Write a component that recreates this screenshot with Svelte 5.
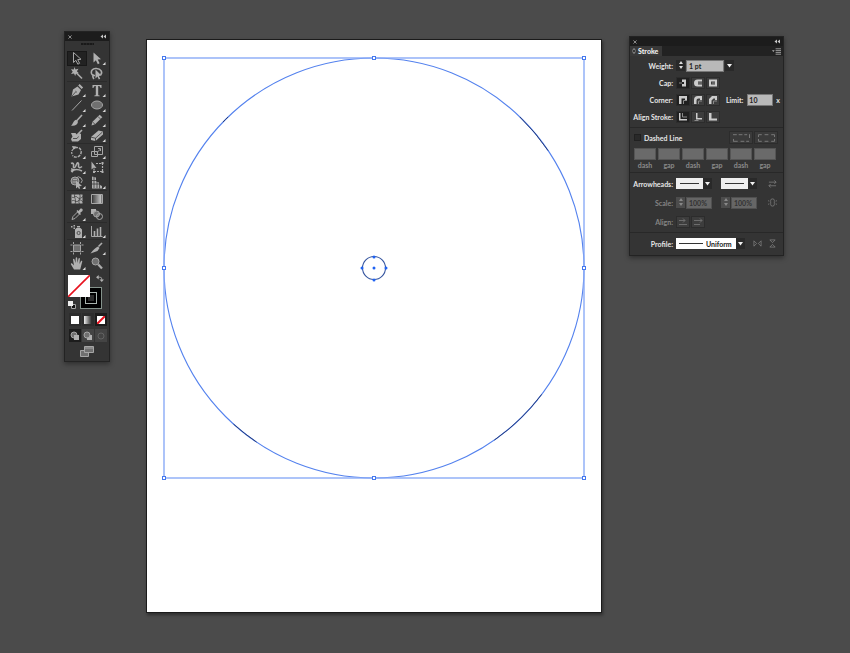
<script>
  const arrow = 'M5.5 1.5v10l2.4-2.2 1.9 3.9 1.8-.9-1.9-3.7 3.3-.3z';
  // Each shape: [kind, path]; f = filled, s = stroked, d = dark detail, t = thick stroke
  const groups = [
    [
      { name: 'Selection', on: true, p: [['d', arrow], ['s', arrow]] },
      { name: 'Direct Selection', more: true, p: [['f', arrow]] },
      { name: 'Magic Wand', p: [['t', 'M8.5 7l5.500 5.500'], ['f', 'M6.5 1l1 2.600 3-.8-1.600 2.500 2 2-2.800.1L7.200 10 6 7.400 3 8l1.700-2.300L3 3.200l2.800.4z']] },
      { name: 'Lasso', p: [['t', 'M7 9.500C2 10 2 3 7.500 2.500s7.500 4 5 6.500M6 9c-2 0-1 3 0 4'], ['f', 'M7.500 3.500v9l2-2 1.300 3 1.400-.7-1.300-2.800 2.600-.4z']] }
    ],
    [
      { name: 'Pen', more: true, p: [['f', 'M3.500 13.500L5 6.500l4.500-3 3.500 3.500-2.500 4.500z'], ['f', 'M10.200 2.600L11.600 1l3.500 3.500-1.500 1.500z'], ['k', 'M4 13l4-4.500M7.500 8.200l1.200 1.100']] },
      { name: 'Type', more: true, p: [['f', 'M4.500 2h9v3h-1c-.3-1.500-.8-2-2.300-2v8.500c0 .8.300 1 1.500 1v.8H6.300v-.8c1.200 0 1.500-.2 1.500-1V3c-1.500 0-2 .5-2.300 2h-1z']] },
      { name: 'Line Segment', more: true, p: [['s', 'M4 12.500L13.500 2.500']] },
      { name: 'Ellipse', more: true, p: [['g', 'M3.500 7a5.500 4 0 1 0 11 0a5.500 4 0 1 0-11 0z'], ['s', 'M3.500 7a5.500 4 0 1 0 11 0a5.500 4 0 1 0-11 0z']] },
      { name: 'Paintbrush', more: true, p: [['t', 'M14 2L8.500 8'], ['f', 'M8 6.800l2 2c-.4 3-3.500 4.500-7 3.700 2-.8 2-4.500 5-5.700z']] },
      { name: 'Pencil', more: true, p: [['f', 'M3.500 12.500l1-3.700 7.200-7 2.600 2.500-7.200 7z'], ['k', 'M4.600 9l2.500 2.400M10 3.500l2.500 2.500']] },
      { name: 'Blob Brush', p: [['f', 'M3 5h4.500L9 7l2-2 2 1v5l-3 2.500H4L3 11l1.500-2.500z'], ['t', 'M8.500 7.500L14 2'], ['k', 'M5 10.500h4l1.500-2']] },
      { name: 'Eraser', more: true, p: [['f', 'M3 9l7.500-6.500 4.500 1v3L7.500 13 3 12z'], ['k', 'M3 9.200l4.500 1 7-6.200M7.500 10v3']] }
    ],
    [
      { name: 'Rotate', more: true, p: [['c', 'M7 2.800c4-1.500 7 2 6 5.500s-6 5.500-8.500 2'], ['r', 'M4 9c-1-3 .5-5 3-6'], ['f', 'M4 1l4.500.4L5.500 5z']] },
      { name: 'Scale', more: true, p: [['s', 'M6.500 1.500h8v8h-8zM3.500 6.500h6v5h-6z'], ['s', 'M9 7.500l3.500-3.500M10 3.500h2.500v2.500']] },
      { name: 'Width', more: true, p: [['t', 'M3 3.500c2-1 3 .5 2.500 2.500s1 2.500 2 .5l1.500-3c1-1.500 2 0 1.500 2s1 3 3.500 1M3 11.500c4-3 7-2.500 11-.5'], ['f', 'M3 8l4 1.500L4 13z']] },
      { name: 'Free Transform', p: [['r', 'M8 3.500h6.500v8H6v-3'], ['f', 'M3.500 1.500v8l2-1.800 3 .2zM13.500 2h2v2h-2zM13.500 11h2v2h-2zM5 11h2v2H5z']] },
      { name: 'Shape Builder', more: true, p: [['g', 'M3 6a4 4 0 1 0 8 0a4 4 0 1 0-8 0z'], ['s', 'M3 6a4 4 0 1 0 8 0a4 4 0 1 0-8 0M8 3a3.500 3.500 0 1 1 5 5M5 4.500h4M4.500 7h4'], ['f', 'M8 5.500v8l1.800-1.600 1.200 2 1.200-.7-1-2 2.800-.3z']] },
      { name: 'Perspective Grid', more: true, p: [['f', 'M4 1.500l4 1v4l3 1v2l3 1.500v2.500H4z'], ['k', 'M6 2v11M9 7v6M4 5.500h4M4 9h9M11.500 9.500v4']] }
    ],
    [
      { name: 'Mesh', p: [['f', 'M3.500 2.500h11v9h-11z'], ['k', 'M4 5c2 2 3-2 5 0s3 2 6-.5M4 9c2-2 4 2 6 0s3-1 5 1M7 2c-2 3 2 5 0 10M11.500 2c2 4-2 6 0 10']] },
      { name: 'Gradient', p: [['bar', 'M4.500 2.500h9v9h-9z'], ['s', 'M3.500 2.500h11v9h-11z']] },
      { name: 'Eyedropper', more: true, p: [['s', 'M4 12.500l1-3 4.500-4.500 2 2L7 11.500z'], ['f', 'M8.500 4l1-1 1 1 2-2.500c2-.5 2.500.8 2 2.500L12 6l1 1-1 1z']] },
      { name: 'Blend', p: [['f', 'M3 2h5v5H3z'], ['g', 'M5.500 7a3 3 0 1 0 6 0a3 3 0 1 0-6 0z'], ['s', 'M5.500 7a3 3 0 1 0 6 0a3 3 0 1 0-6 0zM8.500 9.500a3 3 0 1 0 6 0a3 3 0 1 0-6 0z']] }
    ],
    [
      { name: 'Symbol Sprayer', more: true, p: [['f', 'M7 5.500l1.500-1.500h4L14 5.500V14H7zM9 2h3v1.500H9zM3 2h1.500v1.500H3zM5.500 1h1.500v1.500H5.500zM5.500 3.500h1.500V5H5.500z'], ['k', 'M9 9a1.600 1.600 0 1 0 3.200 0a1.600 1.600 0 1 0-3.200 0']] },
      { name: 'Column Graph', more: true, p: [['s', 'M3.500 2v10.500h11'], ['t', 'M6.500 7v5M9.500 4.500V12M12.500 3v9']] }
    ],
    [
      { name: 'Artboard', p: [['g', 'M5.500 4h7v6.500h-7z'], ['s', 'M5.500 4h7v6.500h-7zM5.500 1v2M12.500 1v2M5.500 11.500v2M12.500 11.500v2M2.500 4h2M13.500 4h2M2.500 10.500h2M13.500 10.500h2']] },
      { name: 'Slice', more: true, p: [['f', 'M2.500 12.500C5 9 8 6.500 10 5.500l1.500 1.500-2 3z'], ['t', 'M10.500 5.500L14 2']] },
      { name: 'Hand', more: true, p: [['f', 'M6 13.500L3 8.500c-.5-1.300.8-1.600 1.500-.7L6 9.500 5 3.500c0-1 1.200-1 1.500 0L7.500 7l.2-5c.2-1 1.400-1 1.500 0l.3 5 1-4.500c.4-1 1.500-.7 1.400.3L11.500 8l1.500-3c.6-.8 1.500-.2 1.200.7l-2 7.800z']] },
      { name: 'Zoom', p: [['g', 'M4 5.500a3.500 3.500 0 1 0 7 0a3.500 3.500 0 1 0-7 0z'], ['s', 'M4 5.500a3.500 3.500 0 1 0 7 0a3.500 3.500 0 1 0-7 0z'], ['w', 'M10.300 8.500l3.700 4']] }
    ]
  ];

  const caps = [
    { name: 'Butt cap', on: true, d: 'M5 1.500h4v7H5V6h2V4H5z', e: 'M2 5h3' },
    { name: 'Round cap', d: 'M10 1.500H5.500a3.500 3.500 0 0 0 0 7H10V6.500H6v-3h4z', e: 'M6 5h4' },
    { name: 'Projecting cap', d: 'M2 1.500h8v7H2zM4 3.500v3h4v-3z', e: 'M5 5h3' }
  ];
  const corners = [
    { name: 'Miter join', on: true, d: 'M2 1h8v4H8V3.500H4.500V9H2z', e: 'M6.500 9V5.500H10' },
    { name: 'Round join', d: 'M10 1H6Q2 1 2 5v4h2.500V5.500q0-2 2-2H8V5h2z', e: 'M6.500 9V6H10' },
    { name: 'Bevel join', d: 'M10 1H5L2 4v5h2.500V5.500l2-2H8V5h2z', e: 'M6.500 9V6H10' }
  ];
  const aligns = [
    { name: 'Center', on: true, d: 'M2 1h1.500v6H10v1.500H2z', e: 'M5.500 1v4H10' },
    { name: 'Inside', d: 'M4 1h1.500v5H10v1.500H4z', e: 'M2.500 8.500h4' },
    { name: 'Outside', d: 'M2 1h2.500v5.500H10V9H2z', e: 'M2 8.500h8' }
  ];
  const rows = [
    { label: 'Cap:', items: caps },
    { label: 'Corner:', items: corners, limit: true },
    { label: 'Align Stroke:', items: aligns }
  ];
  const dashes = ['dash', 'gap', 'dash', 'gap', 'dash', 'gap'];
  const nodes = [[164, 58], [374, 58], [584, 58], [164, 268], [584, 268], [164, 478], [374, 478], [584, 478]];
  const anchors = [[374, 257], [362, 268], [374, 268], [386, 268], [374, 280]];

  let weight = $state('1 pt');
  let limit = $state('10');
  let dashed = $state(false);
</script>

{#snippet spinner(name, off)}
  <span class="spinner" class:off>
    <button aria-label="Increase {name}" disabled={off}><svg viewBox="0 0 8 5"><path d="M4 1l2 3H2z" /></svg></button>
    <button aria-label="Decrease {name}" disabled={off}><svg viewBox="0 0 8 5"><path d="M4 4l2-3H2z" /></svg></button>
  </span>
{/snippet}

{#snippet titlebar()}
  <header class="titlebar">
    <button aria-label="Close"><svg viewBox="0 0 5 5"><path d="M.5 .5l4 4M4.500 .5l-4 4" /></svg></button>
    <button aria-label="Collapse"><svg class="wide" viewBox="0 0 6 5"><path class="solid" d="M3 .5v4l-2.500-2zM6 .5v4l-2.500-2z" /></svg></button>
  </header>
{/snippet}

{#snippet chooser(name, cls, text)}
  <span class="chooser {cls}">
    <select aria-label={name}><option>{text}</option></select>
    <svg viewBox="0 0 9 11"><path d="M2 4h5L4.500 7.500z" /></svg>
  </span>
{/snippet}

<main>
  <aside class="window tools" aria-label="Tools">
    {@render titlebar()}
    <div class="grip"></div>
    {#each groups as group}
      <div class="group">
        {#each group as tool}
          <button class="tool" class:on={tool.on} aria-label={tool.name}>
            <svg viewBox="0 0 18 15">
              {#if tool.name === 'Gradient'}
                <linearGradient id="ramp"><stop stop-color="#444" /><stop offset="1" stop-color="#ccc" /></linearGradient>
              {/if}
              {#each tool.p as [kind, d]}<path class={kind} {d} />{/each}
              {#if tool.more}<path class="more" d="M17.500 11v3h-3z" />{/if}
            </svg>
          </button>
        {/each}
      </div>
    {/each}
    <div class="colors">
      <button class="stroke-box" aria-label="Stroke"><i></i></button>
      <button class="fill-box" aria-label="Fill"><svg viewBox="0 0 22 22"><path d="M0 22L22 0" /></svg></button>
      <button class="swap" aria-label="Swap fill and stroke"><svg viewBox="0 0 9 8"><path class="s" d="M2 2.500h2.500q2 0 2 2V6" /><path class="f" d="M3 0v5L0 2.500zM4 5h5L6.500 8z" /></svg></button>
      <button class="default" aria-label="Default fill and stroke"><svg viewBox="0 0 8 8"><path class="ring" d="M3 3h5v5H3z" /><path class="s" d="M3.500 3.500h4v4h-4z" /><path class="white-fill" d="M0 0h5v5H0z" /></svg></button>
    </div>
    <div class="trio paint">
      <button aria-label="Color"><i class="white"></i></button>
      <button aria-label="Gradient"><i class="fade"></i></button>
      <button aria-label="None" class="on"><i class="white"><svg viewBox="0 0 8 8"><path d="M0 8L8 0" /></svg></i></button>
    </div>
    <div class="trio modes">
      <button aria-label="Draw normal" class="on"><svg viewBox="0 0 12 12"><path class="g" d="M2 5a3 3 0 1 0 6 0a3 3 0 1 0-6 0" /><path class="s" d="M2 5a3 3 0 1 0 6 0a3 3 0 1 0-6 0" /><path class="f" d="M5 5h5v5H5z" /></svg></button>
      <button aria-label="Draw behind"><svg viewBox="0 0 12 12"><path class="f" d="M5 5h5v5H5z" /><path class="g" d="M2 5a3 3 0 1 0 6 0a3 3 0 1 0-6 0" /><path class="s" d="M2 5a3 3 0 1 0 6 0a3 3 0 1 0-6 0" /></svg></button>
      <button aria-label="Draw inside" disabled><svg viewBox="0 0 12 12"><path class="s" d="M3 6a3 3 0 1 0 6 0a3 3 0 1 0-6 0" /></svg></button>
    </div>
    <button class="screen" aria-label="Change screen mode">
      <svg viewBox="0 0 14 11"><path class="g" d="M.5 4.500h8v6h-8z" /><path class="s" d="M.5 4.500h8v6h-8z" /><path class="g" d="M4.500 .5h9v6h-9z" /><path class="s" d="M4.500 .5h9v6h-9zM4.500 2h9" /></svg>
    </button>
  </aside>

  <section class="artboard" aria-label="Artboard">
    <svg viewBox="147 40 454 572">
      <circle class="path" cx="374" cy="268" r="210" />
      <circle class="ink" cx="374" cy="268" r="210" pathLength="360" stroke-dasharray="0 37 18 69 8 92 2 88 12 34" />
      <rect class="bounds" x="164" y="58" width="420" height="420" />
      <circle class="path small" cx="374" cy="268" r="11.500" />
      {#each nodes as [x, y]}<rect class="handle" x={x - 1.5} y={y - 1.5} width="3" height="3" />{/each}
      {#each anchors as [x, y]}<circle class="anchor" cx={x} cy={y} r="1.500" />{/each}
    </svg>
  </section>

  <aside class="window stroke" aria-label="Stroke">
    {@render titlebar()}
    <div class="tabs">
      <button class="tab"><svg viewBox="0 0 4 6"><path d="M.5 2.500L2 .5l1.500 2M.5 3.500L2 5.500l1.500-2" /></svg>Stroke</button>
      <button class="menu" aria-label="Panel menu"><svg viewBox="0 0 10 7"><path class="f" d="M0 2h3L1.500 4z" /><path class="s" d="M4 .5h6M4 2.500h6M4 4.500h6M4 6.500h6" /></svg></button>
    </div>
    <div class="part first">
      <div class="row">
        <label class="name" for="weight">Weight:</label>
        {@render spinner('weight', false)}
        <input id="weight" class="weight" bind:value={weight} />
        <button class="drop" aria-label="Weight presets"><svg viewBox="0 0 9 11"><path d="M2 4h5L4.500 7.500z" /></svg></button>
      </div>
      {#each rows as row}
        <div class="row">
          <span class="name">{row.label}</span>
          <div class="icons">
            {#each row.items as item}
              <button class:on={item.on} aria-label={item.name}><svg viewBox="0 0 12 10"><path class="f" d={item.d} fill-rule="evenodd" /><path class="s" d={item.e} /></svg></button>
            {/each}
          </div>
          {#if row.limit}
            <label class="limit-name" for="limit">Limit:</label>
            <input id="limit" class="limit" bind:value={limit} />
            <span class="times">x</span>
          {/if}
        </div>
      {/each}
    </div>
    <div class="part">
      <div class="row spread">
        <label class="check"><input type="checkbox" bind:checked={dashed} />Dashed Line</label>
        <div class="corner-icons">
          <button disabled aria-label="Preserve exact dashes"><svg viewBox="0 0 18 8"><path d="M.5 8V5M0 .5h4M6 .5h4M12 .5h3M17.500 0v4M1 7.500h4M8 7.500h4M14 7.500h3" /></svg></button>
          <button disabled aria-label="Align dashes to corners"><svg viewBox="0 0 18 8"><path d="M.5 3V.5H4M7 .5h4M14 .5h3.500V3M.5 5v2.500H4M7 7.500h4M14 7.500h3.500V5" /></svg></button>
        </div>
      </div>
      <div class="dash-grid">
        {#each dashes as d, i}
          <label><input disabled aria-label="{d} {i + 1}" />{d}</label>
        {/each}
      </div>
    </div>
    <div class="part arrows">
      <div class="row">
        <span class="name">Arrowheads:</span>
        {@render chooser('Start arrowhead', 'line', '')}
        {@render chooser('End arrowhead', 'line second', '')}
        <button class="plain" aria-label="Swap arrowheads"><svg viewBox="0 0 10 10"><path d="M1 3.500h8M7 1.500l2 2-2 2M9 7.500H1M3 5.500l-2 2 2 2" /></svg></button>
      </div>
      <div class="row dim">
        <span class="name">Scale:</span>
        {@render spinner('start scale', true)}
        <input class="scale" aria-label="Start scale" value="100%" disabled />
        <span class="second">{@render spinner('end scale', true)}</span>
        <input class="scale" aria-label="End scale" value="100%" disabled />
        <button class="plain" aria-label="Link scales" disabled><svg viewBox="0 0 10 10"><path d="M3 4V2.500q0-1.500 2-1.500t2 1.500V4M3 6v1.500q0 1.500 2 1.500t2-1.500V6M3 4v2M7 4v2M0 3l1.500 .5M10 3l-1.500 .5M0 7l1.500-.5M10 7l-1.500-.5" /></svg></button>
      </div>
      <div class="row dim">
        <span class="name">Align:</span>
        <div class="icons">
          <button disabled aria-label="Extend arrow tip"><svg viewBox="0 0 12 10"><path class="s" d="M2 3.500h6M6 1.500l2 2-2 2M2 7.500h8" /></svg></button>
          <button disabled aria-label="Place arrow tip at end"><svg viewBox="0 0 12 10"><path class="s" d="M2 3.500h8M8 1.500l2 2-2 2M2 7.500h6" /></svg></button>
        </div>
      </div>
    </div>
    <div class="part profile">
      <div class="row">
        <span class="name">Profile:</span>
        {@render chooser('Profile', 'uniform', 'Uniform')}
        <button class="plain flip" aria-label="Flip along" disabled><svg viewBox="0 0 10 10"><path d="M1 2v6l3-3zM9 2v6L6 5z" /></svg></button>
        <button class="plain" aria-label="Flip across" disabled><svg viewBox="0 0 10 10"><path d="M2 1h6L5 4zM2 9h6L5 6z" /></svg></button>
      </div>
    </div>
  </aside>
</main>

<style>
  :global(body) { margin: 0; background: #4b4b4b; }
  main {
    box-sizing: border-box;
    min-height: 100vh;
    padding: 31px 64px 40px;
    display: grid;
    grid-template-columns: 46px minmax(200px, 456px) 155px;
    align-items: start;
    background: #4b4b4b;
    color: #e6e6e6;
    font: 700 7px/10px Lato, 'Open Sans', sans-serif;
  }
  button, input, select {
    box-sizing: border-box;
    margin: 0;
    padding: 0;
    border: 0;
    border-radius: 0;
    background: none;
    color: inherit;
    font: inherit;
  }
  button { display: flex; align-items: center; justify-content: center; }
  svg { display: block; overflow: visible; fill: none; }
  .f { fill: #b0b0b0; }
  .s { stroke: #a6a6a6; }
  .t { stroke: #adadad; stroke-width: 1.6; }
  .w { stroke: #adadad; stroke-width: 2.2; }
  .c { stroke: #adadad; stroke-width: 1.4; stroke-dasharray: 3 1; }
  .r { stroke: #adadad; stroke-width: 1.2; stroke-dasharray: 2 1; }
  .k { stroke: #3a3a3a; stroke-width: 0.8; }
  .d { fill: #202020; }
  .g { fill: #707070; }
  .bar { fill: url(#ramp); }
  .more { fill: #d8d8d8; }
  .ring { fill: #111; }
  .white-fill { fill: #eee; }

  .window {
    box-sizing: border-box;
    border: 1px solid #232323;
    background: #343434;
    box-shadow: 0 2px 5px #0006;
  }
  .titlebar {
    height: 9px;
    padding: 0 3px;
    display: flex;
    align-items: center;
    justify-content: space-between;
    background: #1c1c1c;
  }
  .titlebar svg { width: 4px; height: 4px; stroke: #c8c8c8; stroke-width: 0.8; }
  .titlebar svg.wide { width: 6px; height: 5px; }
  .solid { fill: #c8c8c8; stroke: none; }

  .tools { padding-bottom: 4px; }
  .grip { width: 13px; height: 2px; margin: 2px auto 6px; background: repeating-linear-gradient(90deg, #191919 0 2px, #242424 2px 3px); }
  .group { margin: 0 2px; padding: 1px 0 0; display: grid; grid-template-columns: 20px 20px; border-top: 1px solid #2b2b2b; }
  .grip + .group { border-top: 0; padding-top: 0; }
  .tool { width: 20px; height: 15px; }
  .tool svg { width: 18px; height: 15px; }
  .tool.on { background: #222; box-shadow: inset 0 0 0 1px #181818; }
  .colors { position: relative; height: 38px; margin: 4px 3px 0; }
  .colors button { position: absolute; }
  .fill-box { left: 0; top: 0; width: 22px; height: 22px; background: #fff; }
  .fill-box svg { width: 22px; height: 22px; stroke: #e8121f; stroke-width: 1.6; overflow: hidden; }
  .stroke-box { left: 12px; top: 12px; width: 22px; height: 22px; background: #000; border: 1px solid #84928b; }
  .stroke-box i { box-sizing: border-box; width: 12px; height: 12px; border: 1px solid #a9b3ae; background: #2c2c2c; box-shadow: inset 0 0 0 2px #000; }
  .swap { left: 28px; top: 0; }
  .swap svg { width: 8px; height: 7px; }
  .default { left: 0; top: 26px; }
  .default svg { width: 8px; height: 8px; }
  .trio { display: grid; grid-template-columns: repeat(3, 12px); gap: 1px; margin: 0 4px; height: 13px; }
  .trio button { height: 13px; background: #2d2d2d; }
  .trio .on { background: #1c1c1c; }
  .trio i { width: 8px; height: 8px; }
  .white { background: #fff; }
  .white svg { stroke: #e8121f; stroke-width: 2; overflow: hidden; }
  .fade { background: linear-gradient(90deg, #eee, #222); }
  .modes { margin-top: 3px; }
  .modes button { background: #444; }
  .modes svg { width: 12px; height: 12px; }
  .modes button:disabled svg { opacity: 0.3; }
  .screen { margin: 4px auto 0; }
  .screen svg { width: 14px; height: 11px; }

  .artboard { margin: 8px 0 0 36px; width: 100%; box-sizing: border-box; border: 1px solid #1b1b1b; background: #fff; box-shadow: 1px 2px 3px #0006; }
  .artboard svg { width: 100%; height: auto; }
  .path { stroke: #5482ee; stroke-width: 1.1; }
  .small { stroke: #35559f; }
  .ink { stroke: #26386e; stroke-width: 0.9; }
  .bounds { stroke: #8aabf7; stroke-width: 1.4; }
  .handle { fill: #fff; stroke: #4679ee; }
  .anchor { fill: #1f62f2; }

  .stroke { margin: 5px 0 0 63px; width: 155px; }
  .tabs { display: flex; justify-content: space-between; align-items: center; height: 10px; background: #222; }
  .tab { height: 10px; gap: 2px; padding: 0 4px 0 2px; background: #383838; color: #f0f0f0; font-size: 7px; font-weight: 900; }
  .tab svg { width: 4px; height: 6px; stroke: #aaa; stroke-width: 0.8; }
  .menu { padding-right: 2px; }
  .menu svg { width: 9px; height: 7px; }
  .part { padding: 1px 3px; border-top: 1px solid #282828; }
  .first { border-top: 0; padding-bottom: 2px; }
  .row { display: flex; align-items: center; height: 17px; }
  .name { width: 40px; margin-right: 3px; display: flex; justify-content: flex-end; white-space: nowrap; }
  .spinner { width: 9px; height: 11px; margin-right: 1px; display: flex; flex-direction: column; background: #292929; }
  .spinner svg { width: 8px; height: 5px; fill: #ddd; }
  .spinner.off { background: #4c4c4c; }
  .spinner.off svg { fill: #888; }
  .weight, .limit { height: 12px; background: #b9b9b9; border: 1px solid #777; color: #222; }
  .weight { width: 38px; padding-left: 2px; }
  .drop { width: 9px; height: 11px; margin-left: 1px; background: #292929; }
  .drop svg, .chooser svg { width: 9px; height: 11px; fill: #f0f0f0; }
  .icons { display: flex; gap: 1px; }
  .icons button { width: 14px; height: 12px; background: #3d3d3d; box-shadow: inset 0 0 0 1px #2c2c2c; }
  .icons .on { background: #202020; }
  .icons svg { width: 12px; height: 10px; }
  .icons .f { fill: #ccc; }
  .icons .s { stroke: #8a8a8a; }
  .limit-name { margin: 0 4px 0 6px; }
  .limit { width: 26px; padding-left: 1px; }
  .times { margin-left: 3px; }

  .spread { justify-content: space-between; }
  .check { display: flex; align-items: center; gap: 3px; margin-left: 1px; }
  .check input { appearance: none; width: 7px; height: 7px; background: #292929; border: 1px solid #202020; }
  .corner-icons { display: flex; gap: 1px; margin-right: 2px; }
  .corner-icons button { width: 24px; height: 13px; background: #3a3a3a; box-shadow: inset 0 0 0 1px #2c2c2c; }
  .corner-icons svg { width: 17px; height: 8px; stroke: #7c7c7c; }
  .dash-grid { display: grid; grid-template-columns: repeat(6, 22px); gap: 2px; margin: 2px 0 0 1px; color: #8a8a8a; }
  .dash-grid label { display: flex; flex-direction: column; align-items: center; line-height: 11px; }
  .dash-grid input { width: 22px; height: 12px; background: #6a6a6a; border: 1px solid #555; }

  .arrows .row { height: 19px; }
  .chooser { display: flex; align-items: center; position: relative; }
  .chooser select { appearance: none; width: 36px; height: 11px; padding: 0; color: #222; border-right: 9px solid #292929; }
  .chooser svg { position: absolute; right: 0; top: 0; pointer-events: none; }
  .line select { background: linear-gradient(#333, #333) 4px 5px / 19px 1px no-repeat padding-box, #eee padding-box; }
  .uniform select { width: 69px; padding-left: 30px; background: linear-gradient(#333, #333) 3px 5px / 24px 1px no-repeat padding-box, #fff padding-box; }
  .second { margin-left: 9px; }
  .plain { width: 10px; height: 10px; margin-left: auto; margin-right: 3px; }
  .plain svg { width: 9px; height: 9px; stroke: #858585; stroke-width: 0.8; }
  .flip { margin-right: 0; margin-left: 7px; }
  .dim { color: #858585; }
  .scale { width: 26px; height: 12px; padding-left: 2px; background: #666; border: 1px solid #505050; color: #333; }
  .dim .icons .s { stroke: #6d6d6d; }
  .profile { padding-top: 2px; padding-bottom: 3px; }
</style>
